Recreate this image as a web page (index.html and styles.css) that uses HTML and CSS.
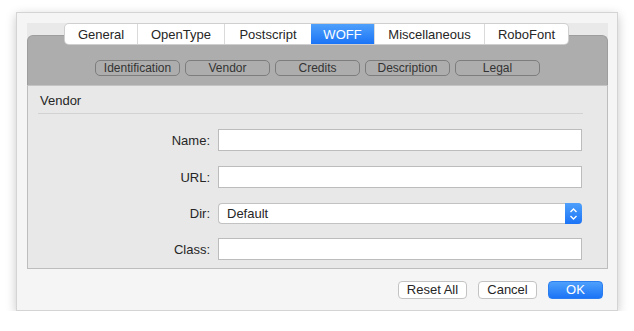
FILE: index.html
```html
<!DOCTYPE html>
<html>
<head>
    <title>Font Info</title>
    <meta charset="utf-8">
    <link rel="stylesheet" href="styles.css">
</head>
<body>
    <div class="window">
        <div class="tabview">
            <div class="tabs">
                <div class="tab t-general">General</div>
                <div class="tab t-opentype">OpenType</div>
                <div class="tab t-postscript">Postscript</div>
                <div class="tab t-woff on">WOFF</div>
                <div class="tab t-misc">Miscellaneous</div>
                <div class="tab t-robo">RoboFont</div>
            </div>
            <div class="header">
                <div class="seg">Identification</div>
                <div class="seg">Vendor</div>
                <div class="seg">Credits</div>
                <div class="seg">Description</div>
                <div class="seg">Legal</div>
            </div>
            <div class="content">
                <div class="section">Vendor</div>
                <div class="form">
                    <label>Name:</label>
                    <div class="field"></div>
                    <label>URL:</label>
                    <div class="field"></div>
                    <label>Dir:</label>
                    <div class="select">
                        <span class="value">Default</span>
                        <span class="arrows">
                            <svg width="9" height="14" viewBox="0 0 9 14">
                                <path d="M1.5 5 L4.5 2 L7.5 5 M1.5 9 L4.5 12 L7.5 9" fill="none" stroke="#fff" stroke-width="1.4"/>
                            </svg>
                        </span>
                    </div>
                    <label>Class:</label>
                    <div class="field"></div>
                </div>
            </div>
        </div>
        <div class="buttons">
            <div class="btn b-reset">Reset All</div>
            <div class="btn b-cancel">Cancel</div>
            <div class="btn b-ok">OK</div>
        </div>
    </div>
</body>
</html>
```

FILE: styles.css
```css
body{
    margin:0;
    background:#fff;
    font-family:"Liberation Sans", Arial, sans-serif;
    color:#262626;
}
.window{
    margin:12px 0 0 16px;
    width:600px;
    height:297px;
    background:#f5f5f5;
    border:1px solid #d4d4d4;
    box-shadow:0 3px 10px rgba(0,0,0,0.22);
}
.tabview{
    margin:10px 9px 0 10px;
    height:246px;
    background:#e9e9e9;
    display:flex;
    flex-direction:column;
}
.tabs{
    position:relative;
    z-index:1;
    display:flex;
    margin:1px 0 0 38px;
    height:20px;
    width:503px;
    background:#fff;
    border-radius:4px;
    box-shadow:0 0 0 1px #cfcfcf;
}
.tab{
    height:20px;
    line-height:21px;
    font-size:13px;
    text-align:center;
    border-left:1px solid #dadada;
    box-sizing:border-box;
}
.tab:first-child{
    border-left:none;
}
.t-general{width:72px;}
.t-opentype{width:87px;}
.t-postscript{width:87px;}
.t-woff{width:63px;}
.t-misc{width:110px;}
.t-robo{width:84px;}
.tab.on{
    background:linear-gradient(#4ea0fb,#1b74f6);
    color:#fff;
    border-left:none;
}
.header{
    margin-top:-9px;
    height:50px;
    background:#adadad;
    border:1px solid #9d9d9d;
    border-bottom:none;
    border-radius:6px 6px 0 0;
    box-sizing:border-box;
    display:flex;
    justify-content:center;
    gap:5px;
    padding-top:24px;
}
.seg{
    width:85px;
    height:16px;
    box-sizing:border-box;
    border:1px solid #7d7d7d;
    border-radius:5px;
    font-size:12px;
    line-height:14px;
    text-align:center;
    color:#333;
}
.content{
    flex:1;
    background:#e8e8e8;
    border:1px solid #bdbdbd;
    border-top:1px solid #c4c4c4;
}
.section{
    margin:0 24px 0 10px;
    padding:7px 0 4px 2px;
    line-height:16px;
    font-size:13px;
    border-bottom:1px solid #d2d2d2;
}
.form{
    display:grid;
    grid-template-columns:172px 364px;
    column-gap:8px;
    row-gap:15px;
    margin:15px 0 0 10px;
}
.form label{
    font-size:13px;
    text-align:right;
    align-self:center;
}
.field{
    height:22px;
    box-sizing:border-box;
    background:#fff;
    border:1px solid #bcbcbc;
}
.select{
    height:21px;
    box-sizing:border-box;
    background:#fff;
    border:1px solid #c2c2c2;
    border-right:none;
    border-radius:4px;
    display:flex;
    align-items:center;
    margin-bottom:-1px;
}
.select .value{
    flex:1;
    font-size:13px;
    padding-left:8px;
}
.arrows{
    width:17px;
    height:21px;
    margin:-1px 0;
    background:linear-gradient(#4ea0fb,#1b74f6);
    border-radius:0 4px 4px 0;
    display:flex;
    align-items:center;
    justify-content:center;
}
.buttons{
    display:flex;
    justify-content:flex-end;
    gap:11px;
    margin:12px 14px 0 0;
}
.btn{
    height:18px;
    box-sizing:border-box;
    background:#fff;
    border:1px solid #c3c3c3;
    border-radius:4px;
    font-size:13px;
    line-height:16px;
    text-align:center;
}
.b-reset{width:69px;}
.b-cancel{width:59px;}
.b-ok{
    width:55px;
    background:linear-gradient(#4ea0fb,#1b74f6);
    border-color:#2b7ef0;
    color:#fff;
}
```
